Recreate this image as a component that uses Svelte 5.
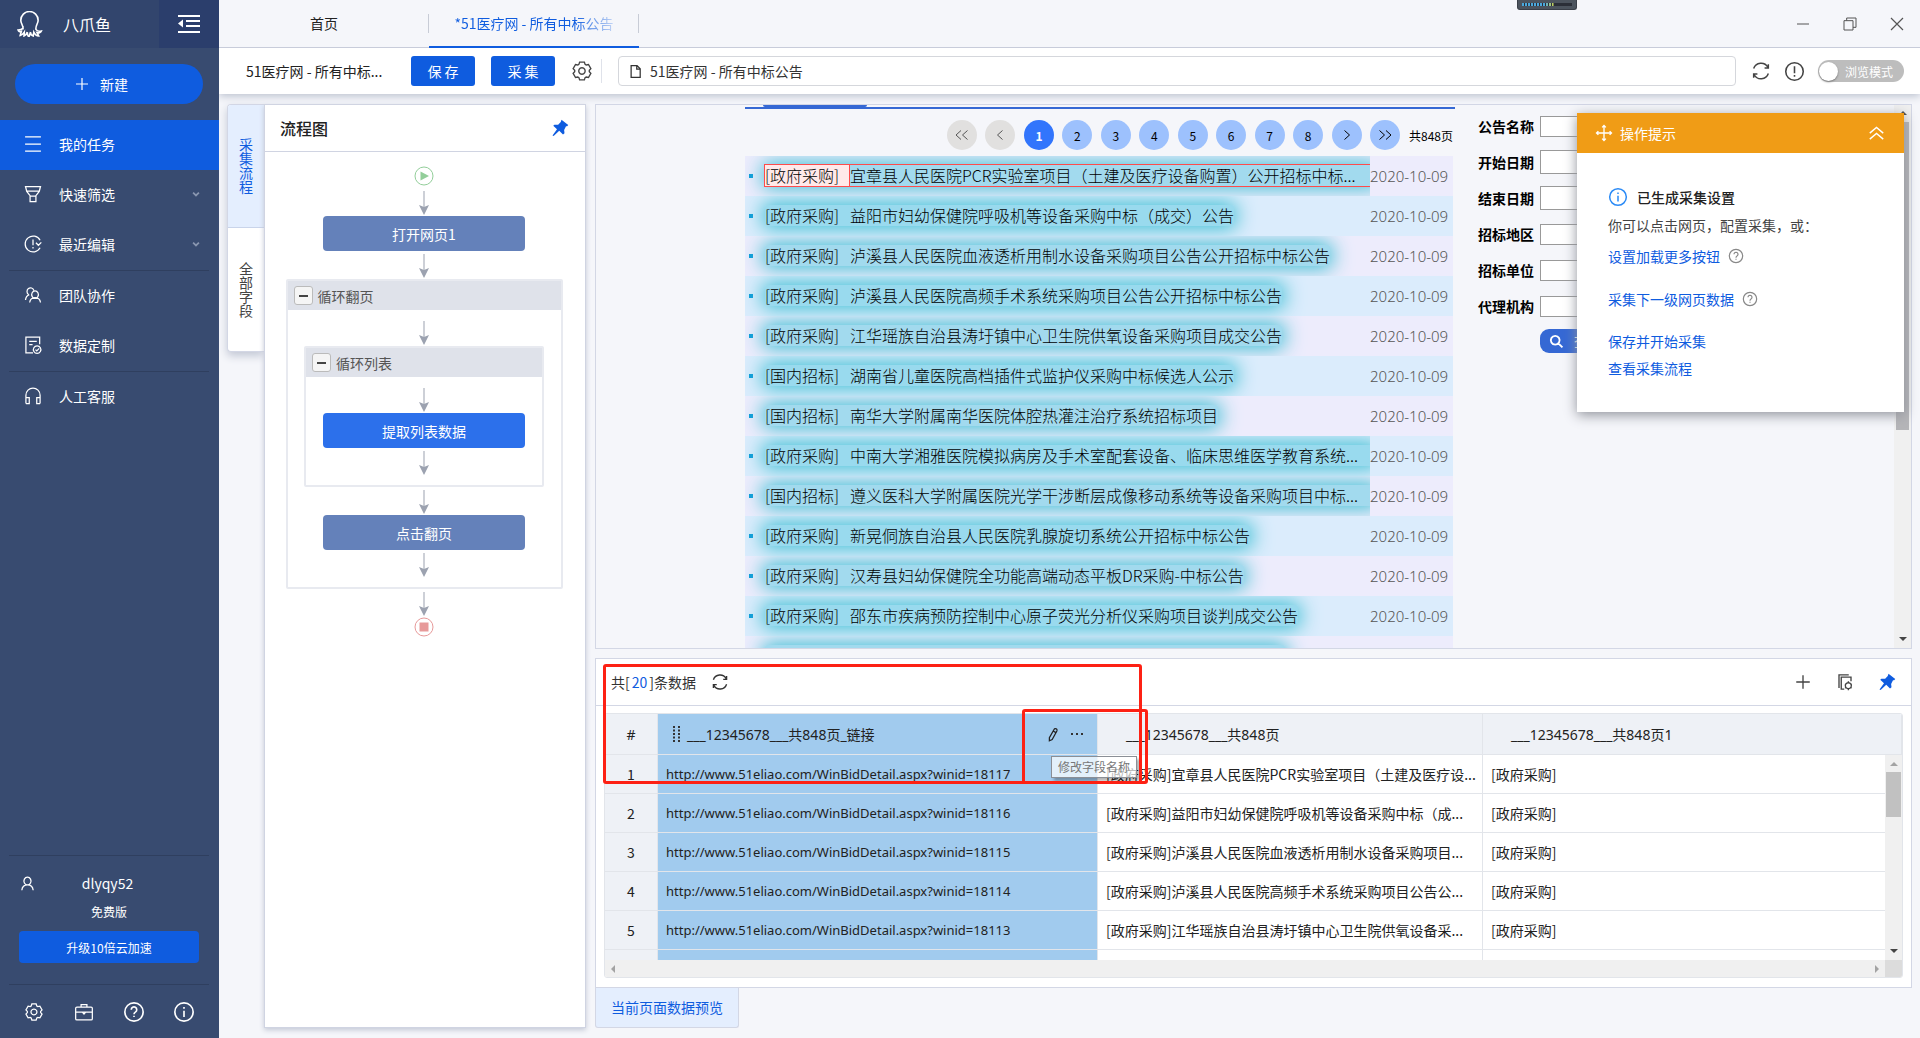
<script>
	// outline of a cog with six teeth, centred in a 24x24 box
	function cog(outer, inner) {
		let pts = []
		for (let i = 0; i < 6; i++) {
			for (const [off, r] of [[-25, inner], [-15, outer], [15, outer], [25, inner]]) {
				const a = ((i * 60 - 90 + off) * Math.PI) / 180
				pts.push(`${(12 + r * Math.cos(a)).toFixed(2)} ${(12 + r * Math.sin(a)).toFixed(2)}`)
			}
		}
		return 'M' + pts.join('L') + 'Z'
	}

	const circle = 'M12 2a10 10 0 1 1 0 20a10 10 0 1 1 0-20z'

	const icons = {
		octopus: 'M5.5 17C6 13 3.5 12 3.5 8.500a8 8 0 0 1 16 0c0 3.500-2.500 4.500-2 8.500 1 1.500 3 2 5 1.500-.5 1.500-2.500 2-4 1.500l1.500 3c-2 0-3.500-1.500-4.500-3.500l-.5 3.500c-1.500-.5-2.500-2-2.500-3.500l-1.500 4.500c-1-1-1.500-2.500-1.500-4.500-.5 1.500-1.500 3-3 3.500l.2-3.500c-1 1.500-2 2.500-3.700 3l1-3.500c-1.500.5-2.500 0-3-1.500 1.500 0 3.500-.5 4.500-1.500z',
		list: 'M2.500 3.500h19M2.500 12h19M2.500 20.500h19',
		funnel: 'M3 3h18l-1.500 6-4 5v7h-7v-7L4.500 9zM4.500 8.500h15M8.500 14.500h7',
		recent: 'M20.500 7.500a9.500 9.500 0 1 0 0 9M12 6.500v7M12 15.500v2M15.500 10.500l3 3 3.500-3.500',
		team: 'M14.500 7a4 4.500 0 1 1-.1 0zM8 21c.5-4 3-6 6.500-6s6 2 6.500 6M6.500 11.500a4.200 4.500 0 1 1 6.500-5M3 18c.3-3.500 2-5.500 4.500-6.500',
		custom: 'M20 11V2.500H3.500v19H12M7.500 7.500h9M7.500 11.500h4M17 13a4.500 4.500 0 1 1-.1 0zM15 17.500l1.500 1.500 3-3',
		phones: 'M3.500 21V11a8.500 8.500 0 0 1 17 0v10M3.500 14h4v7h-4M20.500 14h-4v7h4',
		user: 'M12 3a5 5.500 0 1 1-.1 0zM4 21.500c.5-5 3.500-7.500 8-7.500s7.500 2.500 8 7.500',
		gear: cog(10, 8) + 'M12 8.500a3.500 3.500 0 1 1-.1 0z',
		bag: 'M3.500 6h17a1.500 1.500 0 0 1 1.500 1.500V20a1.500 1.500 0 0 1-1.500 1.500h-17A1.500 1.500 0 0 1 2 20V7.500A1.500 1.500 0 0 1 3.500 6zM8.500 6V3h7v3M2 12h20M10 12l2 2.500 2-2.500',
		help: circle + 'M9 9.500a3 3 0 1 1 4.500 2.600c-1 .6-1.500 1.100-1.500 2.400M12 16v1.500',
		info: circle + 'M12 6.500v2M12 10.500v7',
		warn: circle + 'M12 6v8M12 16v2',
		plus: 'M12 3v18M3 12h18',
		chevron: 'M5 8.500l7 7 7-7',
		refresh: 'M3.200 9a9.300 9.300 0 0 1 17-1.500M20.800 15a9.300 9.300 0 0 1-17 1.500M20.800 4v4.500h-4.500M3.200 20v-4.500h4.500',
		file: 'M5 2.500h9.500l5 5V21.500H5zM14 2.500V8h5.500',
		minimize: 'M3 12h18',
		restore: 'M3 7h13.500v14H3zM7 7V3h14v14h-4.500',
		close: 'M3 3l18 18M21 3L3 21',
		move: 'M12 2v20M2 12h20M9.500 4.500L12 2l2.500 2.500M9.500 19.500L12 22l2.500-2.500M4.500 9.500L2 12l2.500 2.500M19.500 9.500L22 12l-2.500 2.500',
		collapse: 'M2.500 11.500L12 3.500l9.500 8M2.500 20L12 12l9.500 8',
		search: 'M10 3a7 7 0 1 1-.1 0zM15 15l6.500 6.500',
		pencil: 'M15 3c3-1.500 5 1 4 3.500L11.500 20 7 22V17zM13 6.500l4.500 2.500',
		copy: 'M4 20V2.500h13M11 21.500H7V5.500h13V11M16.500 13a4 4 0 1 1-.1 0zM16.500 11v2M16.500 21v2M12 14.500l1.500 1M19.500 19l1.500 1M12 20l1.500-1M19.500 15.500l1.500-1'
	}

	const menu = [
		{ label: '我的任务', icon: 'list', active: true },
		{ label: '快速筛选', icon: 'funnel', more: true },
		{ label: '最近编辑', icon: 'recent', more: true, line: true },
		{ label: '团队协作', icon: 'team' },
		{ label: '数据定制', icon: 'custom', line: true },
		{ label: '人工客服', icon: 'phones' }
	]

	const pages = ['«', '‹', '1', '2', '3', '4', '5', '6', '7', '8', '›', '»']

	const chevrons = {
		'«': 'M6 0.500L1 5l5 4.500M12.500 0.500L7.500 5l5 4.500',
		'‹': 'M9.500 0.500L4.500 5l5 4.500',
		'›': 'M4.500 0.500L9.500 5l-5 4.500',
		'»': 'M1.500 0.500L6.500 5l-5 4.500M8 0.500L13 5l-5 4.500'
	}

	const notices = [
		['政府采购', '宜章县人民医院PCR实验室项目（土建及医疗设备购置）公开招标中标...', 'picked'],
		['政府采购', '益阳市妇幼保健院呼吸机等设备采购中标（成交）公告'],
		['政府采购', '泸溪县人民医院血液透析用制水设备采购项目公告公开招标中标公告'],
		['政府采购', '泸溪县人民医院高频手术系统采购项目公告公开招标中标公告'],
		['政府采购', '江华瑶族自治县涛圩镇中心卫生院供氧设备采购项目成交公告'],
		['国内招标', '湖南省儿童医院高档插件式监护仪采购中标候选人公示'],
		['国内招标', '南华大学附属南华医院体腔热灌注治疗系统招标项目'],
		['政府采购', '中南大学湘雅医院模拟病房及手术室配套设备、临床思维医学教育系统...', 'long'],
		['国内招标', '遵义医科大学附属医院光学干涉断层成像移动系统等设备采购项目中标...', 'long'],
		['政府采购', '新晃侗族自治县人民医院乳腺旋切系统公开招标中标公告'],
		['政府采购', '汉寿县妇幼保健院全功能高端动态平板DR采购-中标公告'],
		['政府采购', '邵东市疾病预防控制中心原子荧光分析仪采购项目谈判成交公告']
	]

	const fields = ['公告名称', '开始日期', '结束日期', '招标地区', '招标单位', '代理机构']

	const rows = [
		['18117', '[政府采购]宜章县人民医院PCR实验室项目（土建及医疗设...'],
		['18116', '[政府采购]益阳市妇幼保健院呼吸机等设备采购中标（成...'],
		['18115', '[政府采购]泸溪县人民医院血液透析用制水设备采购项目...'],
		['18114', '[政府采购]泸溪县人民医院高频手术系统采购项目公告公...'],
		['18113', '[政府采购]江华瑶族自治县涛圩镇中心卫生院供氧设备采...']
	]

	let browse = $state(false)
	let address = $state('51医疗网 - 所有中标公告')
</script>

{#snippet icon(name, size, width = 2)}
	<svg class="icon" width={size} height={size} viewBox="0 0 24 24" stroke-width={width} aria-hidden="true">
		<path d={icons[name]} />
	</svg>
{/snippet}

{#snippet pin()}
	<svg width="18" height="18" viewBox="0 0 24 24" fill="#0f5cdf" aria-hidden="true">
		<path d="M14 1l9 7-1.500 1.500-1.500 0-2.500 5 .5 4.500-2 1.500-5-5L3.500 22.500 2 22l6-8.500-5-4.500L4.500 7.500 9.500 7.500 13 4z" />
	</svg>
{/snippet}

{#snippet arrow()}
	<svg class="arrow" width="12" height="24" viewBox="0 0 12 24" aria-hidden="true">
		<path d="M5.500 0h1v16h-1z" />
		<path d="M1 14l5 2 5-2-5 10z" />
	</svg>
{/snippet}

<div class="app">
	<aside>
		<header>
			<div class="brand">
				{@render icon('octopus', 26, 1.5)}
				<span>八爪鱼</span>
			</div>
			<button class="fold" aria-label="收起菜单">
				<svg width="22" height="18" viewBox="0 0 22 18" aria-hidden="true">
					<path d="M0 0h22v2H0zM8 5h14v2H8zM8 10h14v2H8zM0 16h22v2H0zM0 8.500l5-4v8z" fill="#fff" />
				</svg>
			</button>
		</header>
		<button class="create">{@render icon('plus', 16, 1.800)}<span>新建</span></button>
		<nav>
			{#each menu as item}
				<a href="#{item.icon}" class:active={item.active} class:line={item.line}>
					{@render icon(item.icon, 20, 1.500)}
					<span>{item.label}</span>
					{#if item.more}<i>{@render icon('chevron', 10, 4)}</i>{/if}
				</a>
			{/each}
		</nav>
		<div class="account">
			<div class="who">{@render icon('user', 17, 1.800)}<span>dlyqy52</span></div>
			<p>免费版</p>
			<button>升级10倍云加速</button>
		</div>
		<footer>
			<button aria-label="设置">{@render icon('gear', 20, 1.500)}</button>
			<button aria-label="工具箱">{@render icon('bag', 20, 1.500)}</button>
			<button aria-label="帮助">{@render icon('help', 22, 1.800)}</button>
			<button aria-label="关于">{@render icon('info', 22, 1.800)}</button>
		</footer>
	</aside>

	<main>
		<div class="tabs">
			<a href="#home">首页</a>
			<a href="#task" class="on"><span>*51医疗网 - 所有中标公告</span></a>
			<div class="meter"><i></i></div>
			<div class="window">
				<button aria-label="最小化">{@render icon('minimize', 16, 1.500)}</button>
				<button aria-label="还原">{@render icon('restore', 16, 1.500)}</button>
				<button aria-label="关闭">{@render icon('close', 16, 1.800)}</button>
			</div>
		</div>

		<div class="toolbar">
			<span class="name">51医疗网 - 所有中标...</span>
			<button class="primary">保 存</button>
			<button class="primary">采 集</button>
			<button class="tool gear" aria-label="任务设置">{@render icon('gear', 22, 1.500)}</button>
			<label class="address">
				{@render icon('file', 15, 2)}
				<input type="text" aria-label="网址" bind:value={address} />
			</label>
			<button class="tool" aria-label="刷新">{@render icon('refresh', 20, 1.800)}</button>
			<button class="tool" aria-label="提示">{@render icon('warn', 21, 1.800)}</button>
			<label class="switch" class:checked={browse}>
				<input type="checkbox" bind:checked={browse} />
				<b></b>浏览模式
			</label>
		</div>

		<div class="work">
			<div class="side-tabs">
				<button class="on">采集流程</button>
				<button>全部字段</button>
			</div>

			<section class="flow">
				<header><h2>流程图</h2>{@render pin()}</header>
				<div class="chart">
					<svg width="20" height="20" viewBox="0 0 20 20" aria-hidden="true">
						<circle cx="10" cy="10" r="9" fill="none" stroke="#93ce9a" />
						<path d="M6.500 5.500l8.500 4.500-8.500 4.500z" fill="#93ce9a" />
					</svg>
					{@render arrow()}
					<button class="node">打开网页1</button>
					{@render arrow()}
					<div class="loop outer">
						<div class="title"><button aria-label="折叠"></button>循环翻页</div>
						{@render arrow()}
						<div class="loop inner">
							<div class="title"><button aria-label="折叠"></button>循环列表</div>
							{@render arrow()}
							<button class="node current">提取列表数据</button>
							{@render arrow()}
						</div>
						{@render arrow()}
						<button class="node">点击翻页</button>
						{@render arrow()}
					</div>
					{@render arrow()}
					<svg width="20" height="20" viewBox="0 0 20 20" aria-hidden="true">
						<circle cx="10" cy="10" r="9" fill="none" stroke="#e79a9a" />
						<path d="M5.500 5.500h9v9h-9z" fill="#e79a9a" />
					</svg>
				</div>
			</section>

			<div class="right">
				<section class="browser">
					<div class="page">
						<div class="results">
							<div class="rule"><i></i></div>
							<div class="pager">
								<div class="numbers">
									{#each pages as p, i}
										<button class:off={i < 2} class:now={p === '1'}>
											{#if chevrons[p]}
												<svg width="14" height="10" viewBox="0 0 14 10" fill="none" stroke="currentColor" aria-label={p}>
													<path d={chevrons[p]} />
												</svg>
											{:else}{p}{/if}
										</button>
									{/each}
								</div>
								<span>共848页</span>
							</div>
							<ul>
								{#each notices as [kind, title, state]}
									<li>
										<div class="clip">
											<a href="#notice" class={state}><span>[{kind}]</span>{title}</a>
										</div>
										<time>2020-10-09</time>
									</li>
								{/each}
								<li><div class="clip"><a href="#notice" class="next" aria-label="下一条"></a></div></li>
							</ul>
						</div>
						<form onsubmit={(e) => e.preventDefault()}>
							{#each fields as f, i}
								<label>{f}<input type="text" class:tall={i === 1 || i === 2} /></label>
							{/each}
							<button>{@render icon('search', 15, 3)}查询</button>
						</form>
					</div>
					<div class="page-bar"><i></i></div>

					<div class="tips">
						<header>{@render icon('move', 18, 1.800)}<h3>操作提示</h3>{@render icon('collapse', 17, 2)}</header>
						<div class="body">
							<h4><i>{@render icon('info', 20, 1.800)}</i>已生成采集设置</h4>
							<p>你可以点击网页，配置采集，或：</p>
							<p class="wide"><a href="#more">设置加载更多按钮</a>{@render icon('help', 16, 1.800)}</p>
							<p class="wide"><a href="#next">采集下一级网页数据</a>{@render icon('help', 16, 1.800)}</p>
							<p><a href="#run">保存并开始采集</a></p>
							<p><a href="#flow">查看采集流程</a></p>
						</div>
					</div>
				</section>

				<section class="data">
					<header>
						<span>共[<em>20</em>]条数据</span>
						<button aria-label="刷新数据">{@render icon('refresh', 18, 1.800)}</button>
						<div class="actions">
							<button aria-label="添加字段">{@render icon('plus', 18, 1.800)}</button>
							<button aria-label="批量设置">{@render icon('copy', 18, 1.800)}</button>
							<button aria-label="固定">{@render pin()}</button>
						</div>
					</header>
					<div class="grid">
						<div class="scroll">
							<table>
								<colgroup>
									<col class="c-num" /><col class="c-link" /><col class="c-title" /><col />
								</colgroup>
								<thead>
									<tr>
										<th>#</th>
										<th class="picked">
											<div class="head">
												<svg width="8" height="16" viewBox="0 0 8 16" fill="#333" aria-hidden="true">
													<path d="M0 0h2v2H0zM5 0h2v2H5zM0 3.500h2v2H0zM5 3.500h2v2H5zM0 7h2v2H0zM5 7h2v2H5zM0 10.500h2v2H0zM5 10.500h2v2H5zM0 14h2v2H0zM5 14h2v2H5z" />
												</svg>
												<span>___12345678___共848页_链接</span>
												<button aria-label="修改字段名称">{@render icon('pencil', 15, 2)}</button>
												<button class="dots" aria-label="更多"><i></i><i></i><i></i></button>
											</div>
										</th>
										<th class="plain">___12345678___共848页</th>
										<th class="plain">___12345678___共848页1</th>
									</tr>
								</thead>
								<tbody>
									{#each rows as [id, title], i}
										<tr>
											<td class="num">{i + 1}</td>
											<td class="picked url">http://www.51eliao.com/WinBidDetail.aspx?winid={id}</td>
											<td>{title}</td>
											<td>[政府采购]</td>
										</tr>
									{/each}
									<tr><td class="num"></td><td class="picked"></td><td></td><td></td></tr>
								</tbody>
							</table>
							<div class="v-bar"><i></i></div>
						</div>
						<div class="h-bar"><i></i></div>
					</div>
					<div class="tooltip" role="tooltip">修改字段名称</div>
					<div class="mark big"></div>
					<div class="mark small"></div>
				</section>
				<button class="preview">当前页面数据预览</button>
			</div>
		</div>
	</main>
</div>

<style>
	:global(body) {
		font-family: "Noto Sans CJK SC", "Noto Sans", sans-serif;
		font-size: 14px;
		color: #222;
	}

	* {
		box-sizing: border-box;
	}

	button,
	input {
		font: inherit;
		color: inherit;
		border: 0;
		background: none;
		padding: 0;
	}

	button {
		display: flex;
		align-items: center;
		justify-content: center;
		cursor: pointer;
	}

	a {
		text-decoration: none;
	}

	h2, h3, h4, p, ul {
		margin: 0;
		padding: 0;
	}

	.icon {
		fill: none;
		stroke: currentColor;
		flex: none;
	}

	.app {
		display: flex;
		height: 100vh;
		overflow: hidden;
		background: #f5f6fa;
	}

	/* sidebar */
	aside {
		flex: none;
		width: 219px;
		display: flex;
		flex-direction: column;
		background: #384b70;
		color: #fff;
	}

	aside header {
		display: flex;
		height: 48px;
		background: #32456d;
	}

	.brand {
		flex: 1;
		display: flex;
		align-items: center;
		gap: 20px;
		padding-left: 17px;
		font-size: 16px;
	}

	.fold {
		width: 60px;
		background: #2b3e6c;
	}

	.create {
		margin: 16px 16px 16px 15px;
		height: 40px;
		padding-right: 16px;
		border-radius: 20px;
		gap: 10px;
		background: #0f5cdf;
	}

	nav a {
		display: flex;
		align-items: center;
		gap: 16px;
		height: 50px;
		padding: 0 18px 2px 23px;
		color: #fff;
	}

	nav a.active {
		background: #0f5cdf;
	}

	nav a.line {
		position: relative;
		margin-bottom: 1px;
	}

	nav a.line::after {
		content: '';
		position: absolute;
		top: 100%;
		left: 9px;
		right: 10px;
		height: 1px;
		background: #2f3f5f;
	}

	nav i {
		display: flex;
		margin-left: auto;
		color: #8996b0;
	}

	.account {
		margin: auto 10px 0 9px;
		border-top: 1px solid #2f3f5f;
		padding: 15px 10px 21px;
		text-align: center;
		font-size: 12px;
	}

	.who {
		display: flex;
		align-items: center;
		height: 24px;
		font-size: 14px;
	}

	.who span {
		flex: 1;
		padding-right: 20px;
	}

	.account p {
		line-height: 18px;
		margin: 8px 0 10px;
	}

	.account button {
		width: 100%;
		height: 32px;
		border-radius: 4px;
		background: #0f5cdf;
	}

	aside footer {
		display: flex;
		margin: 0 10px 0 9px;
		height: 54px;
		border-top: 1px solid #2f3f5f;
	}

	aside footer button {
		flex: 1;
	}

	main {
		flex: 1;
		min-width: 0;
		display: flex;
		flex-direction: column;
	}

	/* window tabs */
	.tabs {
		display: flex;
		position: relative;
		height: 48px;
		border-bottom: 1px solid #c8ccda;
	}

	.tabs a {
		position: relative;
		width: 210px;
		display: flex;
		align-items: center;
		justify-content: center;
		padding-bottom: 1px;
		color: #222;
	}

	.tabs a::after {
		content: '';
		position: absolute;
		right: 0;
		top: 14px;
		width: 1px;
		height: 19px;
		background: #c8ccd6;
	}

	.tabs a.on {
		margin-bottom: -1px;
		border-bottom: 2px solid #0f5cdf;
		padding: 0;
	}

	.tabs a.on span {
		white-space: nowrap;
		background: linear-gradient(90deg, #0f5cdf 75%, #c5d6f5);
		background-clip: text;
		color: transparent;
	}

	.meter {
		position: absolute;
		top: 0;
		right: 343px;
		width: 60px;
		height: 10px;
		padding: 3px 4px;
		border-radius: 0 0 3px 3px;
		background: #4c545e;
		border: 1px solid #3a3f48;
		border-top: 0;
	}

	.meter i {
		display: block;
		height: 3px;
		background: repeating-linear-gradient(90deg, transparent 0 2px, #2b2f38 2px 3px), linear-gradient(90deg, #4aa8dc 45%, #c3cf5c 62%, #2b2f38 64%);
	}

	.window {
		display: flex;
		gap: 31px;
		margin-left: auto;
		padding-right: 15px;
		color: #555;
	}

	/* toolbar */
	.toolbar {
		flex: none;
		display: flex;
		align-items: center;
		height: 46px;
		padding: 0 16px 0 27px;
		background: #fff;
		box-shadow: 0 2px 8px #b9bfcd;
		clip-path: inset(0 0 -16px 0);
		z-index: 1;
	}

	.name {
		width: 165px;
	}

	.primary {
		width: 64px;
		height: 30px;
		margin-right: 16px;
		border-radius: 3px;
		background: #0f5cdf;
		color: #fff;
	}

	.tool {
		color: #444;
		margin-right: 13px;
	}

	.gear {
		height: 24px;
		margin: 0 16px 0 0;
		padding-right: 8px;
		border-right: 1px solid #dfe2ea;
	}

	.address {
		flex: 1;
		display: flex;
		align-items: center;
		gap: 7px;
		height: 30px;
		margin-right: 15px;
		padding: 0 9px;
		border: 1px solid #d5d7dc;
		border-radius: 4px;
		color: #333;
	}

	.address input {
		flex: 1;
		outline: 0;
	}

	.switch {
		display: flex;
		align-items: center;
		gap: 7px;
		width: 86px;
		height: 22px;
		border-radius: 11px;
		background: #bdbdbd;
		color: #fff;
		font-size: 12px;
	}

	.switch.checked {
		background: #0f5cdf;
	}

	.switch input {
		position: absolute;
		opacity: 0;
	}

	.switch b {
		width: 19px;
		height: 19px;
		margin-left: 1px;
		border-radius: 50%;
		background: #fff;
		box-shadow: 0 1px 2px #777;
	}

	.work {
		flex: 1;
		min-height: 0;
		display: flex;
		padding: 10px 8px 10px 8px;
	}

	.side-tabs {
		flex: none;
		align-self: flex-start;
		width: 37px;
		border: 1px solid #d3d7e5;
		border-right: 0;
		border-radius: 4px 0 0 4px;
		background: #fff;
		box-shadow: 0 4px 8px #c3c8d5;
		overflow: hidden;
	}

	.side-tabs button {
		width: 100%;
		height: 123px;
		writing-mode: vertical-rl;
		color: #444;
	}

	.side-tabs .on {
		background: #e4eefe;
		color: #0f5cdf;
		border-bottom: 1px solid #c9d4ea;
	}

	/* flow chart */
	.flow {
		flex: none;
		width: 322px;
		margin-right: 9px;
		border: 1px solid #d0d4e2;
		background: #fff;
		box-shadow: 0 2px 5px #c3c8d5;
		z-index: 1;
	}

	.flow header {
		display: flex;
		align-items: center;
		justify-content: space-between;
		height: 47px;
		padding: 0 16px 0 15px;
		border-bottom: 1px solid #d0d4e2;
	}

	h2 {
		font-size: 16px;
		font-weight: 500;
	}

	.chart,
	.loop {
		display: flex;
		flex-direction: column;
		align-items: center;
	}

	.chart {
		padding: 14px 2px 0 0;
	}

	.arrow {
		flex: none;
		margin: 3px 0 1px;
		fill: #9ca2b0;
	}

	.chart > .arrow:nth-of-type(2) {
		margin-top: 5px;
	}

	.node {
		flex: none;
		width: 202px;
		height: 35px;
		border-radius: 4px;
		background: #6481ba;
		color: #fff;
	}

	.node.current {
		background: #2c70eb;
	}

	.loop {
		border: 2px solid #e8eaf0;
		border-radius: 2px;
		padding-bottom: 9px;
	}

	.outer {
		width: 277px;
	}

	.inner {
		width: 240px;
	}

	.loop .title {
		align-self: stretch;
		display: flex;
		align-items: center;
		gap: 5px;
		height: 29px;
		margin-bottom: 8px;
		padding-left: 6px;
		background: #dfe2ea;
		color: #555;
	}

	.title button {
		width: 19px;
		height: 19px;
		border: 1px solid #bbb;
		border-radius: 3px;
		background: #f5f5f5;
	}

	.title button::before {
		content: '';
		width: 9px;
		height: 2px;
		background: #444;
	}

	.right {
		flex: 1;
		min-width: 0;
		display: flex;
		flex-direction: column;
	}

	/* loaded web page */
	.browser {
		position: relative;
		flex: 1;
		min-height: 0;
		display: flex;
		border: 1px solid #d3d7e5;
	}

	.page {
		flex: 1;
		min-width: 0;
		display: flex;
		padding-left: 149px;
		overflow: hidden;
	}

	.results {
		flex: none;
		width: 710px;
	}

	.rule {
		border-bottom: 2px solid #3568d4;
	}

	.rule i {
		display: block;
		width: 104px;
		height: 2px;
		margin-left: 18px;
		background: #3568d4;
		border-radius: 0 0 6px 6px;
	}

	.pager {
		display: flex;
		align-items: center;
		justify-content: flex-end;
		gap: 9px;
		height: 47px;
		padding: 5px 2px 0 0;
		font-size: 12px;
		color: #000;
	}

	.numbers {
		display: flex;
		justify-content: space-between;
		width: 453px;
	}

	.numbers button {
		width: 30px;
		height: 30px;
		border-radius: 50%;
		background: #9dc1fd;
	}

	.numbers .off {
		background: #e1e0df;
		color: #555;
	}

	.numbers .now {
		background: #3275fc;
		color: #fff;
		font-weight: 700;
	}

	ul {
		list-style: none;
		width: 708px;
	}

	li {
		display: flex;
		align-items: center;
		height: 40px;
		background: #edecfc;
	}

	li:nth-child(even) {
		background: #dbecfc;
	}

	li::before {
		content: '';
		width: 4px;
		height: 4px;
		margin-left: 4px;
		background: #109dd8;
	}

	.clip {
		flex: 1;
		height: 40px;
		display: flex;
		align-items: center;
		margin-left: -8px;
		padding: 0 0 1px 20px;
		overflow: hidden;
	}

	.clip a {
		flex: none;
		height: 21px;
		line-height: 21px;
		border-radius: 2px;
		font-size: 16px;
		font-weight: 300;
		white-space: nowrap;
		color: #000;
		background: rgba(88, 199, 223, 0.5);
		box-shadow: 0 0 20px 2px #35bdd2;
	}

	.clip a span {
		display: inline-block;
		width: 85px;
	}

	.clip a.long,
	.clip a.picked {
		width: 612px;
	}

	.clip a.next {
		width: 520px;
	}

	.clip a.picked {
		outline: 1px solid #ff4b4b;
		border-radius: 0;
	}

	.clip a.picked span {
		background: #ffe9e9;
		border-right: 1px solid #ff4b4b;
	}

	time {
		width: 83px;
		padding-bottom: 1px;
		font-family: "Noto Sans", sans-serif;
		font-size: 15px;
		font-weight: 300;
		color: #555;
	}

	form {
		flex: 1;
		padding: 3px 0 0 23px;
		font-weight: 700;
		color: #000;
	}

	form label {
		display: flex;
		align-items: center;
		gap: 6px;
		height: 36px;
		white-space: nowrap;
	}

	form input {
		width: 160px;
		height: 21px;
		border: 1px solid #999;
		background: #fff;
	}

	form input.tall {
		height: 24px;
	}

	form button {
		justify-content: flex-start;
		gap: 10px;
		width: 100px;
		height: 24px;
		margin: 5px 0 0 62px;
		padding-left: 9px;
		border-radius: 9px;
		background: #3568d4;
		color: #fff;
		font-weight: 400;
	}

	.page-bar {
		position: relative;
		flex: none;
		width: 17px;
		padding: 17px 2px;
		background: #f0f0f0;
	}

	.page-bar i {
		display: block;
		height: 308px;
		background: #b5b5b8;
	}

	.page-bar::before,
	.page-bar::after {
		content: '';
		position: absolute;
		left: 5px;
		bottom: 7px;
		border: 4px solid transparent;
		border-bottom: 0;
		border-top-color: #444;
	}

	.page-bar::before {
		top: 6px;
		bottom: auto;
		border: 4px solid transparent;
		border-top: 0;
		border-bottom-color: #444;
	}

	.tips {
		position: absolute;
		top: 8px;
		right: 7px;
		width: 327px;
		background: #fff;
		box-shadow: 0 3px 12px #8f929a;
	}

	.tips header {
		display: flex;
		align-items: center;
		gap: 7px;
		height: 40px;
		padding: 0 19px 0 18px;
		background: #f09c16;
		color: #fff;
	}

	h3 {
		flex: 1;
		font-size: 14px;
		font-weight: 400;
	}

	.body {
		padding: 29px 31px 31px;
	}

	h4 {
		display: flex;
		align-items: center;
		gap: 9px;
		height: 30px;
		font-size: 14px;
		font-weight: 500;
	}

	h4 i {
		display: flex;
		color: #2a8af6;
	}

	.body p {
		display: flex;
		align-items: center;
		gap: 8px;
		height: 26px;
		color: #444;
	}

	.body .wide {
		height: 43px;
		padding-bottom: 8px;
		color: #888;
	}

	.wide + p:not(.wide) {
		margin: 4px 0 1px;
	}

	.body a {
		color: #0f5cdf;
	}

	/* extracted data */
	.data {
		position: relative;
		flex: none;
		margin-top: 9px;
		border: 1px solid #d3d7e5;
		background: #fff;
	}

	.data header {
		display: flex;
		align-items: center;
		gap: 15px;
		height: 47px;
		padding: 0 15px;
		border-bottom: 1px solid #d3d7e5;
		color: #333;
	}

	.data em {
		font-style: normal;
		padding: 0 2px;
		color: #0f5cdf;
	}

	.actions {
		display: flex;
		gap: 24px;
		margin-left: auto;
		color: #444;
	}

	.grid {
		margin: 7px 8px 9px;
		border: 1px solid #e2e5ea;
		border-radius: 3px;
		overflow: hidden;
	}

	.scroll {
		position: relative;
		height: 246px;
		overflow: hidden;
	}

	table {
		width: 100%;
		table-layout: fixed;
		border-collapse: separate;
		border-spacing: 0;
	}

	.c-num {
		width: 53px;
	}

	.c-link {
		width: 440px;
	}

	.c-title {
		width: 385px;
	}

	th,
	td {
		height: 39px;
		padding: 0 8px;
		border-right: 1px solid #e2e5ea;
		border-bottom: 1px solid #e2e5ea;
		text-align: left;
		white-space: nowrap;
		font-weight: 400;
		overflow: hidden;
	}

	th {
		height: 41px;
		font-family: "Noto Sans", "Noto Sans CJK SC", sans-serif;
		background: #eef1f6;
	}

	th.plain {
		padding-left: 28px;
	}

	th:first-child,
	.num {
		text-align: center;
		background: #eef1f6;
	}

	.picked {
		background: #a1cbee;
	}

	td.url {
		font-family: "Noto Sans", sans-serif;
		font-size: 13px;
	}

	.head {
		display: flex;
		align-items: center;
		padding: 0 6px 0 7px;
	}

	.head span {
		flex: 1;
		padding-left: 6px;
	}

	.dots {
		gap: 3px;
		margin-left: 11px;
	}

	.dots i {
		width: 2px;
		height: 2px;
		background: #333;
	}

	.v-bar {
		position: absolute;
		top: 41px;
		right: 0;
		bottom: 0;
		width: 17px;
		padding: 17px 1px;
		background: #f0f0f0;
	}

	.v-bar i {
		display: block;
		height: 45px;
		background: #c1c1c1;
	}

	.v-bar::before,
	.v-bar::after {
		content: '';
		position: absolute;
		left: 5px;
		top: 7px;
		border: 4px solid transparent;
		border-top: 0;
		border-bottom-color: #a3a3a3;
	}

	.v-bar::after {
		top: auto;
		bottom: 7px;
		border: 4px solid transparent;
		border-bottom: 0;
		border-top-color: #444;
	}

	.h-bar {
		display: flex;
		align-items: center;
		justify-content: space-between;
		height: 17px;
		padding-left: 6px;
		background: #f0f0f0;
	}

	.h-bar::before {
		content: '';
		border: 4px solid transparent;
		border-left: 0;
		border-right-color: #a3a3a3;
	}

	.h-bar::after {
		content: '';
		width: 17px;
		height: 17px;
		background: #dcdcdc;
	}

	.h-bar i {
		margin: 0 6px 0 auto;
		border: 4px solid transparent;
		border-right: 0;
		border-left-color: #a3a3a3;
	}

	.tooltip {
		position: absolute;
		top: 97px;
		left: 455px;
		padding: 0 6px;
		border: 1px solid #8b8f96;
		background: rgba(255, 255, 255, 0.7);
		box-shadow: 3px 3px 3px rgba(0, 0, 0, 0.3);
		font-size: 12px;
		line-height: 20px;
		color: #777;
	}

	.mark {
		position: absolute;
		border: 3px solid #fd2114;
		border-radius: 3px;
		pointer-events: none;
	}

	.big {
		top: 5px;
		left: 7px;
		width: 539px;
		height: 120px;
	}

	.small {
		top: 50px;
		left: 426px;
		width: 126px;
		height: 75px;
	}

	.preview {
		flex: none;
		align-self: flex-start;
		height: 40px;
		padding: 0 15px 2px;
		border: 1px solid #d3d7e5;
		border-top: 0;
		border-radius: 0 0 3px 3px;
		background: #e4eefe;
		color: #0f5cdf;
	}
</style>
